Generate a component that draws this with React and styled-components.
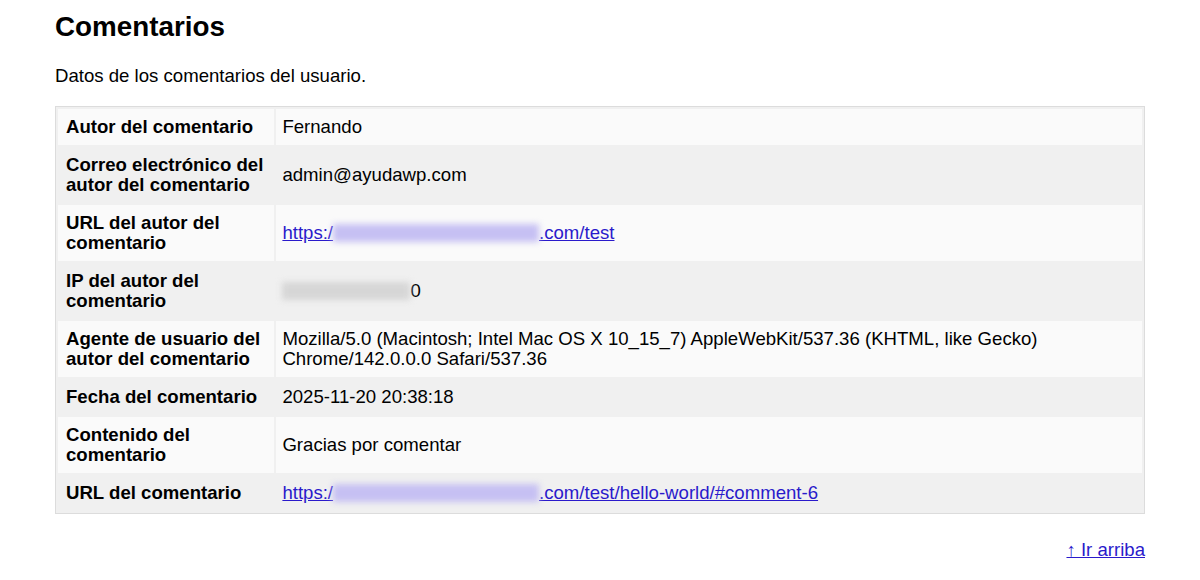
import React from "react";
import styled, { createGlobalStyle } from "styled-components";

const Global = createGlobalStyle`
  html, body { margin: 0; padding: 0; background: #fff; }
  body {
    font-family: "Liberation Sans", Arial, sans-serif;
    font-size: 18.6px;
    color: #000;
  }
`;

const Page = styled.div`
  width: 1090px;
  padding: 0 0 0 55px;
`;

const Title = styled.h2`
  font-size: 27.8px;
  font-weight: bold;
  margin: 11px 0 0;
  line-height: 32px;
`;

const Intro = styled.p`
  margin: 22px 0 0;
  line-height: 21px;
`;

const Table = styled.table`
  margin-top: 20px;
  width: 100%;
  background: #f0f0f0;
  border: 1px solid #dcdcdc;
  border-spacing: 2px;
`;

const Row = styled.tr`
  background: ${(p) => (p.$odd ? "#fafafa" : "transparent")};
`;

const Head = styled.th`
  width: 20%;
  text-align: left;
  padding: 8px 8px;
  font-weight: bold;
  line-height: 20px;
  vertical-align: middle;
`;

const Cell = styled.td`
  padding: 8px 6px;
  line-height: 20px;
  vertical-align: middle;
`;

const Link = styled.a`
  color: #2a1acb;
  text-decoration: underline;
`;

const Redacted = styled.span`
  display: inline-block;
  width: ${(p) => p.$w}px;
  height: 18px;
  vertical-align: -3px;
  background: ${(p) => p.$c};
  filter: blur(3px);
`;

const Footer = styled.div`
  text-align: right;
  margin-top: 25px;
`;

const rows = [
  { h: "Autor del comentario", v: "Fernando" },
  { h: "Correo electrónico del autor del comentario", v: "admin@ayudawp.com" },
  {
    h: "URL del autor del comentario",
    v: (
      <Link href="#">
        https:/<Redacted $w={206} $c="#c6c0f3" />.com/test
      </Link>
    ),
  },
  {
    h: "IP del autor del comentario",
    v: (
      <>
        <Redacted $w={128} $c="#d6d6d6" />0
      </>
    ),
  },
  {
    h: "Agente de usuario del autor del comentario",
    v: "Mozilla/5.0 (Macintosh; Intel Mac OS X 10_15_7) AppleWebKit/537.36 (KHTML, like Gecko) Chrome/142.0.0.0 Safari/537.36",
  },
  { h: "Fecha del comentario", v: "2025-11-20 20:38:18" },
  { h: "Contenido del comentario", v: "Gracias por comentar" },
  {
    h: "URL del comentario",
    v: (
      <Link href="#">
        https:/<Redacted $w={206} $c="#c6c0f3" />.com/test/hello-world/#comment-6
      </Link>
    ),
  },
];

export default function App() {
  return (
    <>
      <Global />
      <Page>
        <Title>Comentarios</Title>
        <Intro>Datos de los comentarios del usuario.</Intro>
        <Table>
          <tbody>
            {rows.map((r, i) => (
              <Row key={i} $odd={i % 2 === 0}>
                <Head>{r.h}</Head>
                <Cell>{r.v}</Cell>
              </Row>
            ))}
          </tbody>
        </Table>
        <Footer>
          <Link href="#">↑ Ir arriba</Link>
        </Footer>
      </Page>
    </>
  );
}
